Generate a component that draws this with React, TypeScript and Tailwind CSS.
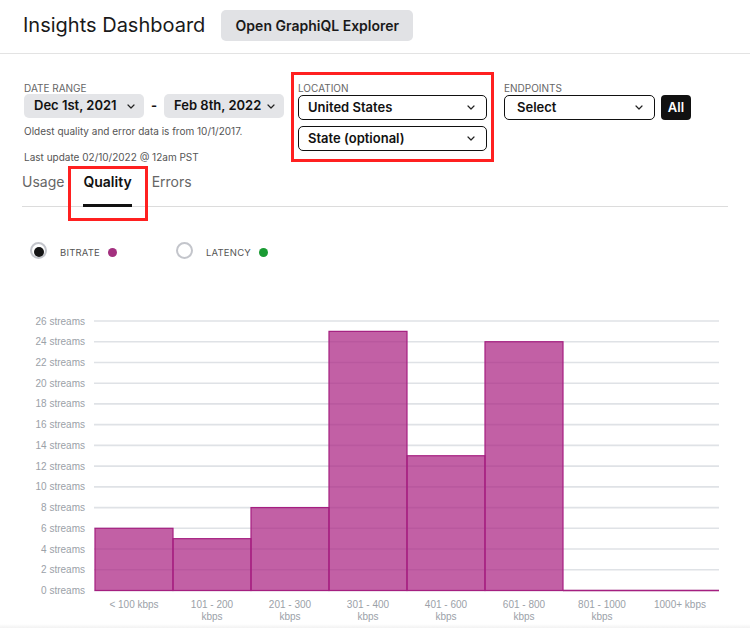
import React from "react";

const Chevron = () => (
  <svg width="8" height="5" viewBox="0 0 8 5" fill="none">
    <path d="M1 1l3 3 3-3" stroke="#222" strokeWidth="1.2" strokeLinecap="round" strokeLinejoin="round" />
  </svg>
);

const bars = [6, 5, 8, 25, 13, 24, 0, 0];
const xLabels: string[][] = [
  ["< 100 kbps"],
  ["101 - 200", "kbps"],
  ["201 - 300", "kbps"],
  ["301 - 400", "kbps"],
  ["401 - 600", "kbps"],
  ["601 - 800", "kbps"],
  ["801 - 1000", "kbps"],
  ["1000+ kbps"],
];

function Chart() {
  const zeroY = 290.5;
  const unit = (290.5 - 21) / 26;
  const x0 = 95;
  const bw = 78;
  const ticks = Array.from({ length: 14 }, (_, i) => i * 2);
  return (
    <svg width="750" height="328" viewBox="0 0 750 328" className="block">
      {ticks.map((t) => {
        const y = zeroY - t * unit;
        return (
          <g key={t}>
            <line x1={94} x2={719} y1={y} y2={y} stroke="#dfe2e6" strokeWidth={1.6} />
            <text
              x={85}
              y={y + 3.5}
              textAnchor="end"
              fontSize="10"
              fill="#9ba1a8"
              fontFamily="'Liberation Sans', Arial, sans-serif"
            >
              {t} streams
            </text>
          </g>
        );
      })}
      {bars.map((v, i) => {
        const x = x0 + i * bw;
        const h = v * unit;
        return v > 0 ? (
          <rect
            key={i}
            x={x}
            y={zeroY - h}
            width={bw}
            height={h}
            fill="rgba(170,35,130,0.72)"
            stroke="#a51f80"
            strokeWidth={1.2}
          />
        ) : null;
      })}
      <line x1={x0 + 6 * bw} x2={719} y1={zeroY} y2={zeroY} stroke="#a51f80" strokeWidth={1.4} />
      {xLabels.map((lines, i) => (
        <text
          key={i}
          x={x0 + i * bw + bw / 2}
          y={308}
          textAnchor="middle"
          fontSize="10"
          fill="#9ba1a8"
          fontFamily="'Liberation Sans', Arial, sans-serif"
        >
          {lines.map((l, j) => (
            <tspan key={j} x={x0 + i * bw + bw / 2} dy={j === 0 ? 0 : 12}>
              {l}
            </tspan>
          ))}
        </text>
      ))}
    </svg>
  );
}

export default function App() {
  return (
    <div
      className="relative h-[628px] w-[750px] overflow-hidden bg-white text-[#111]"
      style={{ fontFamily: "Inter, 'Noto Sans', sans-serif" }}
    >
      {/* Header */}
      <div className="flex h-[54px] items-start border-b border-[#e3e3e3] pl-[23px] pt-[10px]">
        <h1 className="mt-[1px] text-[20px] font-normal leading-[28px] text-[#1a1a1a]">
          Insights Dashboard
        </h1>
        <button className="ml-[16px] h-[31px] w-[192px] rounded-[5px] bg-[#e1e2e5] text-[14px] font-semibold text-[#1a1a1a]">
          Open GraphiQL Explorer
        </button>
      </div>

      {/* Filters */}
      <div className="mt-[18px] flex items-start pl-[24px]">
        <div className="w-[260px] pt-[10px]">
          <div className="text-[10px] uppercase leading-[12px] text-[#666]">Date Range</div>
          <div className="mt-0 flex items-center">
            <div className="flex h-[24px] w-[121px] items-center justify-between rounded-[5px] bg-[#e4e5e8] pl-[10px] pr-[9px]">
              <span className="text-[13px] font-semibold">Dec 1st, 2021</span>
              <Chevron />
            </div>
            <span className="mx-[7px] text-[13px] font-bold">-</span>
            <div className="flex h-[24px] w-[121px] items-center justify-between rounded-[5px] bg-[#e4e5e8] pl-[10px] pr-[9px]">
              <span className="text-[13px] font-semibold">Feb 8th, 2022</span>
              <Chevron />
            </div>
          </div>
          <div className="mt-[6px] text-[10px] leading-[14px] text-[#555]">
            Oldest quality and error data is from 10/1/2017.
          </div>
          <div className="mt-[12px] text-[10px] leading-[14px] text-[#555]">
            Last update 02/10/2022 @ 12am PST
          </div>
        </div>

        <div className="ml-[7px] w-[203px] border-[3px] border-[#ff2020] px-[4px] pb-[8px] pt-[7px]">
          <div className="text-[10px] uppercase leading-[12px] text-[#666]">Location</div>
          <div className="mt-[1px] flex h-[25px] items-center justify-between rounded-[5px] border border-[#111] pl-[9px] pr-[11px]">
            <span className="text-[13px] font-semibold">United States</span>
            <Chevron />
          </div>
          <div className="mt-[6px] flex h-[25px] items-center justify-between rounded-[5px] border border-[#111] pl-[9px] pr-[11px]">
            <span className="text-[13px] font-semibold">State (optional)</span>
            <Chevron />
          </div>
        </div>

        <div className="ml-[10px] pt-[10px]">
          <div className="text-[10px] uppercase leading-[12px] text-[#666]">Endpoints</div>
          <div className="mt-[1px] flex items-center">
            <div className="flex h-[25px] w-[151px] items-center justify-between rounded-[5px] border border-[#111] pl-[12px] pr-[11px]">
              <span className="text-[13px] font-semibold">Select</span>
              <Chevron />
            </div>
            <div className="ml-[6px] flex h-[25px] w-[30px] items-center justify-center rounded-[4px] bg-[#111] text-[13px] font-semibold text-white">
              All
            </div>
          </div>
        </div>
      </div>

      {/* Tabs */}
      <div className="relative mx-[22px] mt-[1px] flex h-[42px] items-start border-b border-[#dcdcdc] pt-[7px] text-[14px]">
        <span className="leading-[20px] text-[#666]">Usage</span>
        <span className="relative ml-[19px] font-semibold leading-[20px] text-[#111]">
          Quality
          <span className="absolute left-0 right-0 top-[32px] h-[3px] bg-[#111]" />
          <span className="absolute left-[-15px] top-[-6px] h-[55px] w-[80px] border-[3px] border-[#ff2020]" />
        </span>
        <span className="ml-[20px] leading-[20px] text-[#666]">Errors</span>
      </div>

      {/* Radios */}
      <div className="mt-[34px] flex items-center pl-[30px]">
        <div className="relative h-[17px] w-[17px] rounded-full border-2 border-[#c3c5cb]">
          <span className="absolute left-[2px] top-[3px] h-[10px] w-[10px] rounded-full bg-[#151515]" />
        </div>
        <span className="ml-[13px] mt-[5px] text-[9.5px] uppercase tracking-[0.2px] text-[#555]">Bitrate</span>
        <span className="ml-[8px] mt-[4px] h-[9px] w-[9px] rounded-full bg-[#a3307f]" />
        <div className="ml-[59px] h-[17px] w-[17px] rounded-full border-2 border-[#c3c5cb]" />
        <span className="ml-[13px] mt-[5px] text-[9.5px] uppercase tracking-[0.2px] text-[#555]">Latency</span>
        <span className="ml-[8px] mt-[4px] h-[9px] w-[9px] rounded-full bg-[#1a9b33]" />
      </div>

      {/* Chart */}
      <div className="absolute left-0 top-[300px]">
        <Chart />
      </div>
      <div className="absolute bottom-0 left-0 h-[4px] w-full bg-gradient-to-b from-white to-[#f2f2f2]" />
    </div>
  );
}
